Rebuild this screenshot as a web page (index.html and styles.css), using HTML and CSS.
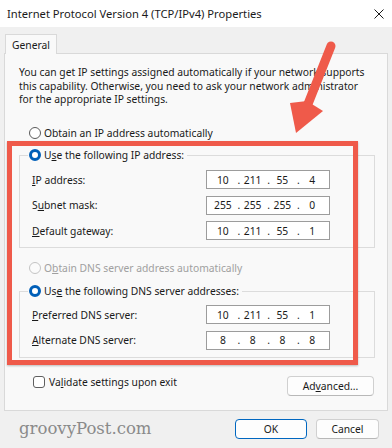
FILE: index.html
```html
<!DOCTYPE html>
<html lang="en">
<head>
    <meta charset="UTF-8">
    <meta name="viewport" content="width=device-width, initial-scale=1.0">
    <title>Internet Protocol Version 4 (TCP/IPv4) Properties</title>
    <link rel="stylesheet" href="styles.css">
</head>
<body>
    <div class="window">
        <!-- Title bar -->
        <div class="titlebar">
            <span class="title">Internet Protocol Version 4 (TCP/IPv4) Properties</span>
            <svg class="close-icon" viewBox="0 0 10 10" width="10" height="10">
                <path d="M0.5 0.5 L9.5 9.5 M9.5 0.5 L0.5 9.5" stroke="#1a1a1a" stroke-width="1" fill="none"/>
            </svg>
        </div>

        <div class="tabs">
            <div class="tab">General</div>
        </div>

        <div class="panel">
            <p class="intro">You can get IP settings assigned automatically if your network supports<br>this capability. Otherwise, you need to ask your network administrator<br>for the appropriate IP settings.</p>

            <div class="option option-first"><span class="radio"></span><span>Obtain an IP address automatically</span></div>

            <fieldset class="group">
                <legend><span class="option"><span class="radio checked"></span><span>U<u>s</u>e the following IP address:</span></span></legend>
                <div class="field">
                    <span class="field-label"><u>I</u>P address:</span>
                    <div class="ip-box"><span>10</span><i>.</i><span>211</span><i>.</i><span>55</span><i>.</i><span>4</span></div>
                </div>
                <div class="field">
                    <span class="field-label">S<u>u</u>bnet mask:</span>
                    <div class="ip-box"><span>255</span><i>.</i><span>255</span><i>.</i><span>255</span><i>.</i><span>0</span></div>
                </div>
                <div class="field">
                    <span class="field-label"><u>D</u>efault gateway:</span>
                    <div class="ip-box"><span>10</span><i>.</i><span>211</span><i>.</i><span>55</span><i>.</i><span>1</span></div>
                </div>
            </fieldset>

            <div class="option option-dns disabled"><span class="radio"></span><span>O<u>b</u>tain DNS server address automatically</span></div>

            <fieldset class="group group-dns">
                <legend><span class="option"><span class="radio checked"></span><span>Us<u>e</u> the following DNS server addresses:</span></span></legend>
                <div class="field">
                    <span class="field-label"><u>P</u>referred DNS server:</span>
                    <div class="ip-box"><span>10</span><i>.</i><span>211</span><i>.</i><span>55</span><i>.</i><span>1</span></div>
                </div>
                <div class="field">
                    <span class="field-label"><u>A</u>lternate DNS server:</span>
                    <div class="ip-box"><span>8</span><i>.</i><span>8</span><i>.</i><span>8</span><i>.</i><span>8</span></div>
                </div>
            </fieldset>

            <div class="panel-foot">
                <div class="check"><span class="checkbox"></span><span>Va<u>l</u>idate settings upon exit</span></div>
                <button class="btn btn-advanced">Ad<u>v</u>anced...</button>
            </div>
        </div>

        <div class="footer">
            <span class="watermark">groovyPost.com</span>
            <button class="btn btn-ok">OK</button>
            <button class="btn btn-cancel">Cancel</button>
        </div>

        <!-- Red callout drawn over the dialog -->
        <div class="callout-box"></div>
        <svg class="callout-arrow" viewBox="0 0 392 448" width="392" height="448">
            <line x1="331" y1="46" x2="308" y2="104" stroke="#ef5a4a" stroke-width="9" stroke-linecap="round"/>
            <polygon points="296,133 290,103 307,101 323,111" fill="#ef5a4a"/>
        </svg>
    </div>
</body>
</html>
```

FILE: styles.css
```css
body {
    margin: 0;
    background-color: #f0f0f0;
    font-family: "Noto Sans", "Open Sans", sans-serif;
    font-size: 10.3px;
    color: #1a1a1a;
}

.window {
    position: relative;
    width: 392px;
    height: 448px;
    overflow: hidden;
}

.titlebar {
    height: 27px;
    background-color: #ffffff;
    display: flex;
    align-items: center;
    justify-content: space-between;
    padding: 0 8px 0 7px;
    box-sizing: border-box;
}

.title {
    font-size: 11.2px;
}

.tabs {
    display: flex;
    padding: 7px 0 0 5px;
}

.tab {
    position: relative;
    z-index: 1;
    height: 20px;
    line-height: 20px;
    width: 52px;
    box-sizing: border-box;
    padding-left: 6px;
    background-color: #f9f9f9;
    border: 1px solid #d9d9d9;
    border-bottom: none;
    margin-bottom: -1px;
}

.panel {
    margin: 0 4px;
    padding: 12px 12px 14px 14px;
    border: 1px solid #d9d9d9;
    background-color: #f9f9f9;
}

.intro {
    margin: 0;
    line-height: 13.5px;
    white-space: nowrap;
}

.option {
    display: flex;
    align-items: center;
    gap: 3px;
    height: 14px;
    white-space: nowrap;
}

.option-first {
    margin: 19.5px 0 0 10px;
}

.option-dns {
    margin: 13px 0 0 10px;
}

.disabled {
    color: #a0a0a0;
}

.radio {
    width: 12px;
    height: 12px;
    box-sizing: border-box;
    border: 1px solid #5a5a5a;
    border-radius: 50%;
    background-color: #ffffff;
    flex-shrink: 0;
}

.radio.checked {
    border: 3.5px solid #005fb8;
    background-color: #ffffff;
}

.disabled .radio {
    border-color: #c4c4c4;
    background-color: #fbfbfb;
}

.group {
    margin: 8px 0 0;
    padding: 0 0 7px;
    border: 1px solid #dcdcdc;
    min-width: 0;
}

.group-dns {
    margin-top: 9px;
    padding-bottom: 7.5px;
}

.group legend {
    margin-left: 8px;
    padding: 0 3px 0 1px;
}

.field {
    display: flex;
    align-items: center;
    height: 19px;
    padding-left: 12px;
    margin-top: 6.5px;
}

.group legend + .field {
    margin-top: 8px;
}

.group-dns legend + .field {
    margin-top: 7px;
}

.field-label {
    width: 174px;
}

.ip-box {
    display: flex;
    align-items: center;
    width: 124px;
    height: 19px;
    box-sizing: border-box;
    border: 1px solid #9c9c9c;
    background-color: #ffffff;
    padding: 0 2px 0 1px;
}

    .ip-box span {
        flex: 1;
        text-align: center;
    }

    .ip-box i {
        font-style: normal;
        width: 0;
        display: flex;
        justify-content: center;
        position: relative;
        left: 1px;
    }

.panel-foot {
    display: flex;
    justify-content: space-between;
    align-items: flex-start;
    margin-top: 18px;
}

.check {
    display: flex;
    align-items: center;
    gap: 4px;
    height: 12px;
    margin-left: 14px;
    white-space: nowrap;
}

.checkbox {
    width: 12px;
    height: 12px;
    box-sizing: border-box;
    border: 1px solid #5f5f5f;
    border-radius: 3px;
    background-color: #ffffff;
}

.btn {
    font-family: inherit;
    font-size: 10.3px;
    color: #1a1a1a;
    height: 20px;
    padding: 0;
    background-color: #fdfdfd;
    border: 1px solid #d0d0d0;
    border-bottom-color: #b8b8b8;
    border-radius: 4px;
}

.btn-advanced {
    width: 87px;
    margin-right: 1px;
}

.footer {
    display: flex;
    align-items: center;
    height: 20px;
    margin-top: 8px;
    padding: 0 13px 0 19px;
}

.watermark {
    flex: 1;
    font-family: "DejaVu Serif", serif;
    font-size: 16.5px;
    color: #8a8a8a;
    line-height: 20px;
}

.btn-ok {
    width: 72px;
    margin-right: 9px;
    border: 1px solid #0067c0;
}

.btn-cancel {
    width: 63px;
}

.callout-box {
    position: absolute;
    left: 7px;
    top: 141px;
    width: 351px;
    height: 224px;
    box-sizing: border-box;
    border: 5px solid #ef5a4a;
    box-shadow: 0 1px 2px rgba(0, 0, 0, 0.25);
    pointer-events: none;
}

.callout-arrow {
    position: absolute;
    left: 0;
    top: 0;
    pointer-events: none;
}
```
